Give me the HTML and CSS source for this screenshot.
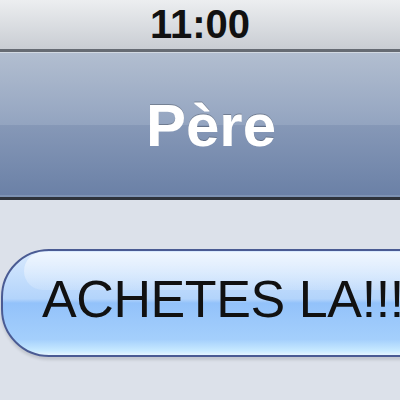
FILE: index.html
```html
<!DOCTYPE html>
<html lang="fr">

<head>
  <meta charset="UTF-8">
  <meta name="viewport" content="width=device-width, initial-scale=1.0">
  <title>Messages</title>
  <link rel="stylesheet" href="styles.css">
</head>

<body>
  <!-- Barre d'état -->
  <div class="status-bar">11:00</div>

  <!-- Barre de navigation -->
  <div class="nav-bar">
    <h1 class="nav-title">Père</h1>
  </div>

  <!-- Conversation -->
  <div class="conversation">
    <div class="bubble">
      <span class="bubble-text">ACHETES LA!!!</span>
    </div>
  </div>
</body>

</html>
```

FILE: styles.css
```css
body {
  margin: 0;
  font-family: "Liberation Sans", Arial, sans-serif;
  background-color: #dce1ea;
  overflow: hidden;
  height: 400px;
}

.status-bar {
  height: 49px;
  border-bottom: 3px solid #666b73;
  background: linear-gradient(#eceef0, #c9cdd3);
  color: #111;
  font-size: 40px;
  font-weight: bold;
  line-height: 49px;
  text-align: center;
}

.nav-bar {
  height: 144px;
  border-top: 1px solid #d2d9e2;
  border-bottom: 3px solid #2e333b;
  box-shadow: inset 0 -2px 0 #7d92b3;
  background: linear-gradient(#b2bed0 0%, #93a4c0 50%, #8698b7 50%, #6a80a6 100%);
  display: flex;
  align-items: center;
  justify-content: center;
}

.nav-title {
  margin: 0;
  padding-left: 22px;
  color: #fff;
  font-size: 60px;
  font-weight: bold;
  text-shadow: 0 -1px 0 rgba(0, 0, 0, 0.25);
}

.conversation {
  padding-top: 49px;
}

/* Bulle de message */
.bubble {
  position: relative;
  box-sizing: border-box;
  width: 480px;
  height: 108px;
  margin-left: 1px;
  border: 2px solid #4a5b93;
  border-radius: 48px 0 0 48px;
  background: linear-gradient(#d9eafe 0%, #b3d4fb 46%, #93c2fa 50%, #a4cffc 85%, #c8eaff 96%, #e6f6ff 100%);
  box-shadow: 0 3px 3px rgba(0, 0, 0, 0.12);
  display: flex;
  align-items: center;
  padding-left: 39px;
}

.bubble::before {
  content: "";
  position: absolute;
  left: 21px;
  top: 1px;
  right: 0;
  height: 38px;
  border-radius: 20px 0 0 20px;
  background: linear-gradient(rgba(255, 255, 255, 0.6), rgba(255, 255, 255, 0.15));
}

.bubble-text {
  position: relative;
  margin-top: -9px;
  color: #111;
  font-size: 52px;
  white-space: nowrap;
  letter-spacing: -0.4px;
}
```
